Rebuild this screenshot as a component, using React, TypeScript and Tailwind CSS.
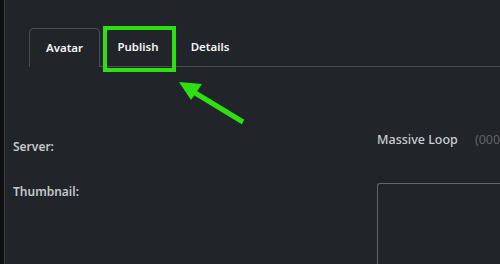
import React from "react";

export default function App() {
  return (
    <div
      className="relative w-[500px] h-[264px] overflow-hidden bg-[#212429] flex"
      style={{ fontFamily: '"Noto Sans", "Open Sans", sans-serif' }}
    >
      <div className="shrink-0 w-[4px] h-full bg-[#0f1012] border-r border-[#3a3d42] box-content" />
      <div className="flex-1 min-w-0 flex flex-col">
        <div className="flex items-end mt-[28px] pl-[24px] h-[39px]">
          <div className="shrink-0 w-[71px] h-[39px] border border-b-0 border-[#4a4d52] rounded-t-[5px] flex items-center justify-center text-[11.5px] font-semibold text-[#f3f4f6]">
            Avatar
          </div>
          <div className="flex-1 h-[39px] border-b border-[#4a4d52] flex items-center">
            <div className="w-[76px] flex justify-center text-[11.5px] font-semibold text-[#f3f4f6]">Publish</div>
            <div className="w-[68px] flex justify-center text-[11.5px] font-semibold text-[#f3f4f6]">Details</div>
          </div>
        </div>
        <div className="flex mt-[64px] pl-[8px]">
          <div className="shrink-0 w-[364px] flex flex-col">
            <div className="text-[12px] font-semibold text-[#c3c8cd] leading-[16px] mt-[8px]">Server:</div>
            <div className="text-[12px] font-semibold text-[#c3c8cd] leading-[16px] mt-[29px]">Thumbnail:</div>
          </div>
          <div className="flex-1 min-w-0 flex flex-col">
            <div className="flex items-center text-[12.5px] leading-[18px] whitespace-nowrap">
              <span className="font-medium text-[#c9ced3]">Massive Loop</span>
              <span className="ml-[17px] text-[#5f646a]">(000</span>
            </div>
            <div className="mt-[34px] h-[120px] border-l border-t border-[#62666b] rounded-tl-[3px]" />
          </div>
        </div>
      </div>

      <div className="absolute left-[103px] top-[26px] w-[73px] h-[46px] border-[4px] border-[#2ee012]" />
      <svg className="absolute left-0 top-0" width="500" height="264">
        <line x1="243" y1="122" x2="192" y2="91" stroke="#2ee012" strokeWidth="5" />
        <polygon points="179,82 202,84 191,100" fill="#2ee012" />
      </svg>
    </div>
  );
}
